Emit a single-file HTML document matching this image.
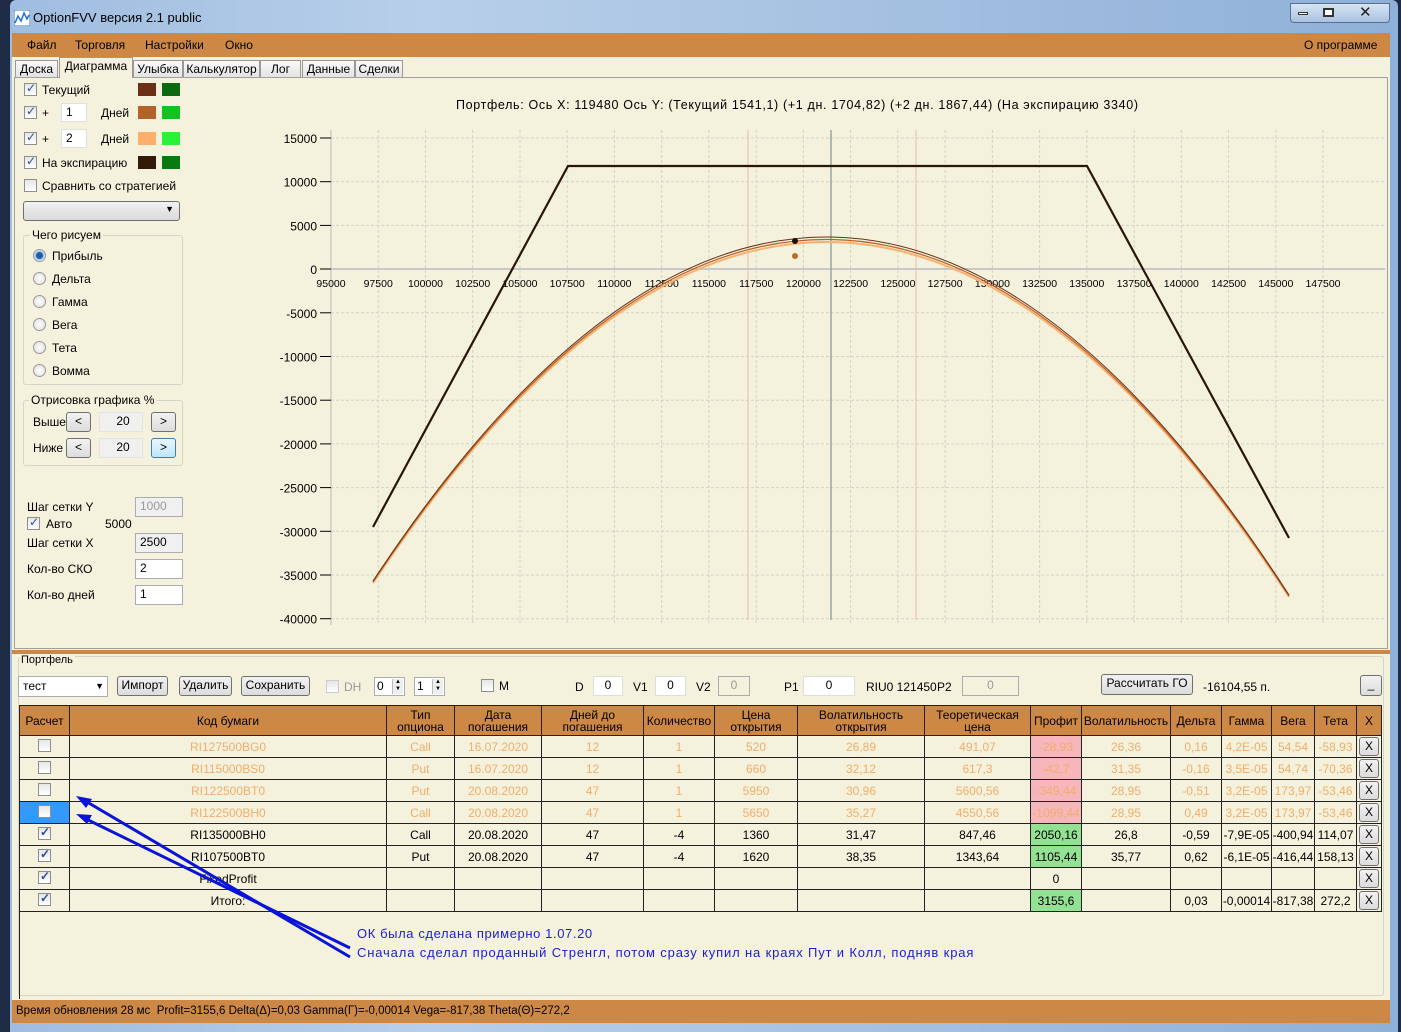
<!DOCTYPE html>
<html><head><meta charset="utf-8">
<style>
*{box-sizing:border-box;margin:0;padding:0}
body{width:1401px;height:1032px;position:relative;overflow:hidden;background:#1d2b45;font-family:"Liberation Sans","DejaVu Sans",sans-serif;font-size:12px;color:#000}
.a{position:absolute}
.n{font-family:"Liberation Sans Narrow","Liberation Sans",sans-serif}
.cb{position:absolute;width:13px;height:13px;border:1px solid #8e8f8f;background:linear-gradient(#e6e6e6,#fff)}
.cb.c::after{content:"✓";position:absolute;left:1px;top:-3px;font-size:12px;color:#2b4f9c;font-weight:bold}
.rb{position:absolute;width:13px;height:13px;border-radius:50%;border:1px solid #999;background:radial-gradient(#fff,#ddd)}
.rb.c{background:radial-gradient(#1b5fa8 0 3px,#9fc3e6 4px,#fff 6px)}
.in{position:absolute;background:#fff;border:1px solid #abadb3;padding-left:4px;line-height:17px}
.btn{position:absolute;border:1px solid #707070;border-radius:3px;background:linear-gradient(#f2f2f2,#dcdcdc);text-align:center;line-height:17px}
.sw{position:absolute;width:18px;height:13px}
.tab{position:absolute;top:60px;height:17px;border:1px solid #999;border-bottom:none;background:linear-gradient(#fafafa,#e3e3e3);text-align:center;line-height:16px}
table{border-collapse:collapse;table-layout:fixed}
td{border:1px solid #222;height:22px;text-align:center;font-family:"Liberation Sans Narrow","Liberation Sans",sans-serif;font-size:12px;white-space:nowrap;overflow:hidden}
th{border:1px solid #222;background:#cd8846;font-weight:normal;font-family:"Liberation Sans Narrow","Liberation Sans",sans-serif;font-size:12px;line-height:12px;height:30px}
tr.f td{color:#f2ad6a}
td.pk{background:#f6b6bb}
td.gr{background:#93e193}
.grp{position:absolute;border:1px solid #d5d5c8;border-radius:3px}
.gl{position:absolute;background:#f4f2dd;padding:0 2px}
.sp{position:absolute;right:1px;top:1px;width:11px;height:15px;border-left:1px solid #bbb;font-size:6px;line-height:7px;text-align:center;background:#eee}
</style></head><body>
<div class="a" style="left:10px;top:0;width:1388px;height:1032px;background:linear-gradient(90deg,#9fbde0,#b8cfe9 30%,#8fb0d8);border-radius:6px 6px 0 0"></div>
<div class="a" style="left:1290px;top:3px;width:100px;height:20px;border:1px solid #5a6f8f;border-radius:0 0 4px 4px;background:linear-gradient(#d6e4f3,#a9c2e0)"></div>
<div class="a" style="left:1298px;top:12px;width:10px;height:3px;background:#fff;border:1px solid #333"></div>
<div class="a" style="left:1323px;top:8px;width:11px;height:9px;border:2px solid #333;background:#fff"></div>
<div class="a" style="left:1359px;top:3px;font-size:15px;font-weight:bold;color:#222">✕</div>
<svg class="a" style="left:14px;top:10px" width="16" height="16"><rect width="16" height="16" fill="#fff" stroke="#3a6fc0"/><polyline points="1,13 4,6 7,11 10,3 13,9 15,5" fill="none" stroke="#1f6fd6" stroke-width="1.5"/></svg>
<div class="a" style="left:33px;top:10px;font-size:13px">OptionFVV версия 2.1 public</div>
<div class="a" style="left:12px;top:33px;width:1378px;height:990px;background:#f4f2dd"></div>
<div class="a" style="left:12px;top:33px;width:1378px;height:24px;background:#cd8846"></div>
<div class="a" style="top:38px;left:27px;font-size:12px">Файл</div>
<div class="a" style="top:38px;left:75px">Торговля</div>
<div class="a" style="top:38px;left:145px">Настройки</div>
<div class="a" style="top:38px;left:225px">Окно</div>
<div class="a" style="top:38px;left:1304px">О программе</div>
<div class="tab" style="left:15px;width:43px">Доска</div>
<div class="tab" style="left:59px;width:74px;top:57px;height:21px;background:#f4f2dd;z-index:2">Диаграмма</div>
<div class="tab" style="left:133px;width:50px">Улыбка</div>
<div class="tab" style="left:183px;width:77px">Калькулятор</div>
<div class="tab" style="left:260px;width:41px">Лог</div>
<div class="tab" style="left:302px;width:53px">Данные</div>
<div class="tab" style="left:355px;width:48px">Сделки</div>
<div class="a" style="left:14px;top:77px;width:1374px;height:572px;border:1px solid #a0a0a0"></div>
<div class="cb c" style="left:24px;top:83px"></div><div class="a" style="left:42px;top:83px">Текущий</div>
<div class="sw" style="left:138px;top:83px;background:#6b3015"></div><div class="sw" style="left:162px;top:83px;background:#0a6a10"></div>
<div class="cb c" style="left:24px;top:106px"></div><div class="a" style="left:42px;top:106px">+</div>
<div class="in" style="left:61px;top:103px;width:26px;height:19px;border-color:#e0e0e0">1</div><div class="a" style="left:101px;top:106px">Дней</div>
<div class="sw" style="left:138px;top:106px;background:#b4622c"></div><div class="sw" style="left:162px;top:106px;background:#12c21e"></div>
<div class="cb c" style="left:24px;top:132px"></div><div class="a" style="left:42px;top:132px">+</div>
<div class="in" style="left:61px;top:129px;width:26px;height:19px;border-color:#e0e0e0">2</div><div class="a" style="left:101px;top:132px">Дней</div>
<div class="sw" style="left:138px;top:132px;background:#fdb06c"></div><div class="sw" style="left:162px;top:132px;background:#2af23a"></div>
<div class="cb c" style="left:24px;top:156px"></div><div class="a" style="left:42px;top:156px">На экспирацию</div>
<div class="sw" style="left:138px;top:156px;background:#341a08"></div><div class="sw" style="left:162px;top:156px;background:#097a10"></div>
<div class="cb" style="left:24px;top:179px"></div><div class="a" style="left:42px;top:179px">Сравнить со стратегией</div>
<div class="a" style="left:23px;top:201px;width:157px;height:20px;border:1px solid #707070;border-radius:3px;background:linear-gradient(#f2f2f2,#dadada)"><span class="a" style="right:5px;top:2px;font-size:9px">▼</span></div>
<div class="grp" style="left:23px;top:235px;width:160px;height:150px"></div>
<div class="gl" style="left:30px;top:228px">Чего рисуем</div>
<div class="rb c" style="left:33px;top:249px"></div><div class="a" style="left:52px;top:249px">Прибыль</div>
<div class="rb" style="left:33px;top:272px"></div><div class="a" style="left:52px;top:272px">Дельта</div>
<div class="rb" style="left:33px;top:295px"></div><div class="a" style="left:52px;top:295px">Гамма</div>
<div class="rb" style="left:33px;top:318px"></div><div class="a" style="left:52px;top:318px">Вега</div>
<div class="rb" style="left:33px;top:341px"></div><div class="a" style="left:52px;top:341px">Тета</div>
<div class="rb" style="left:33px;top:364px"></div><div class="a" style="left:52px;top:364px">Вомма</div>
<div class="grp" style="left:23px;top:400px;width:160px;height:66px"></div>
<div class="gl" style="left:29px;top:393px">Отрисовка графика %</div>
<div class="a" style="left:33px;top:415px">Выше</div>
<div class="btn" style="left:66px;top:412px;width:25px;height:20px">&lt;</div>
<div class="in" style="left:99px;top:412px;width:44px;height:20px;background:#f0f0f0;border-color:#e4e4e4;text-align:center">20</div>
<div class="btn" style="left:151px;top:412px;width:25px;height:20px">&gt;</div>
<div class="a" style="left:33px;top:441px">Ниже</div>
<div class="btn" style="left:66px;top:438px;width:25px;height:20px">&lt;</div>
<div class="in" style="left:99px;top:438px;width:44px;height:20px;background:#f0f0f0;border-color:#e4e4e4;text-align:center">20</div>
<div class="btn" style="left:151px;top:438px;width:25px;height:20px;border-color:#3c7fb1;background:linear-gradient(#eaf6fd,#bee6fd)">&gt;</div>
<div class="a n" style="left:27px;top:500px">Шаг сетки Y</div>
<div class="in n" style="left:135px;top:497px;width:48px;height:20px;background:#f0f0f0;color:#999">1000</div>
<div class="cb c" style="left:27px;top:517px"></div><div class="a n" style="left:46px;top:517px">Авто</div><div class="a n" style="left:105px;top:517px">5000</div>
<div class="a n" style="left:27px;top:536px">Шаг сетки X</div>
<div class="in n" style="left:135px;top:533px;width:48px;height:20px;background:#f0f0f0">2500</div>
<div class="a n" style="left:27px;top:562px">Кол-во СКО</div>
<div class="in n" style="left:135px;top:559px;width:48px;height:20px">2</div>
<div class="a n" style="left:27px;top:588px">Кол-во дней</div>
<div class="in n" style="left:135px;top:585px;width:48px;height:20px">1</div>
<svg class="a" style="left:0;top:0" width="1401" height="660" font-family="Liberation Sans, sans-serif">
<g stroke="#d4d2c4" stroke-dasharray="3,2" stroke-width="1">
<line x1="331" y1="138" x2="1385" y2="138"/><line x1="331" y1="181.7" x2="1385" y2="181.7"/><line x1="331" y1="225.4" x2="1385" y2="225.4"/><line x1="331" y1="312.8" x2="1385" y2="312.8"/><line x1="331" y1="356.5" x2="1385" y2="356.5"/><line x1="331" y1="400.2" x2="1385" y2="400.2"/><line x1="331" y1="443.9" x2="1385" y2="443.9"/><line x1="331" y1="487.6" x2="1385" y2="487.6"/><line x1="331" y1="531.3" x2="1385" y2="531.3"/><line x1="331" y1="575" x2="1385" y2="575"/><line x1="331" y1="618.7" x2="1385" y2="618.7"/>
<line x1="378.2" y1="130" x2="378.2" y2="625"/><line x1="425.5" y1="130" x2="425.5" y2="625"/><line x1="472.7" y1="130" x2="472.7" y2="625"/><line x1="520" y1="130" x2="520" y2="625"/><line x1="567.2" y1="130" x2="567.2" y2="625"/><line x1="614.4" y1="130" x2="614.4" y2="625"/><line x1="661.7" y1="130" x2="661.7" y2="625"/><line x1="708.9" y1="130" x2="708.9" y2="625"/><line x1="756.2" y1="130" x2="756.2" y2="625"/><line x1="803.4" y1="130" x2="803.4" y2="625"/><line x1="850.6" y1="130" x2="850.6" y2="625"/><line x1="897.9" y1="130" x2="897.9" y2="625"/><line x1="945.1" y1="130" x2="945.1" y2="625"/><line x1="992.4" y1="130" x2="992.4" y2="625"/><line x1="1039.6" y1="130" x2="1039.6" y2="625"/><line x1="1086.8" y1="130" x2="1086.8" y2="625"/><line x1="1134.1" y1="130" x2="1134.1" y2="625"/><line x1="1181.3" y1="130" x2="1181.3" y2="625"/><line x1="1228.6" y1="130" x2="1228.6" y2="625"/><line x1="1275.8" y1="130" x2="1275.8" y2="625"/><line x1="1323" y1="130" x2="1323" y2="625"/>
</g>
<line x1="331" y1="269" x2="1385" y2="269" stroke="#c8c8c8" stroke-width="2"/>
<line x1="331" y1="130" x2="331" y2="625" stroke="#bbb"/>
<line x1="748" y1="130" x2="748" y2="620" stroke="#f2b8b0"/>
<line x1="916" y1="130" x2="916" y2="620" stroke="#f2b8b0"/>
<line x1="831" y1="130" x2="831" y2="620" stroke="#9aa89c" stroke-width="1.5"/>
<g stroke="#000"><line x1="320" y1="138" x2="331" y2="138"/><line x1="320" y1="181.7" x2="331" y2="181.7"/><line x1="320" y1="225.4" x2="331" y2="225.4"/><line x1="320" y1="269" x2="331" y2="269"/><line x1="320" y1="312.8" x2="331" y2="312.8"/><line x1="320" y1="356.5" x2="331" y2="356.5"/><line x1="320" y1="400.2" x2="331" y2="400.2"/><line x1="320" y1="443.9" x2="331" y2="443.9"/><line x1="320" y1="487.6" x2="331" y2="487.6"/><line x1="320" y1="531.3" x2="331" y2="531.3"/><line x1="320" y1="575" x2="331" y2="575"/><line x1="320" y1="618.7" x2="331" y2="618.7"/></g>
<g font-size="12" text-anchor="end"><text x="317" y="143">15000</text><text x="317" y="186.7">10000</text><text x="317" y="230.4">5000</text><text x="317" y="274">0</text><text x="317" y="317.8">-5000</text><text x="317" y="361.5">-10000</text><text x="317" y="405.2">-15000</text><text x="317" y="448.9">-20000</text><text x="317" y="492.6">-25000</text><text x="317" y="536.3">-30000</text><text x="317" y="580">-35000</text><text x="317" y="623.7">-40000</text></g>
<g font-size="10.5" text-anchor="middle"><text x="331" y="287">95000</text><text x="378.2" y="287">97500</text><text x="425.5" y="287">100000</text><text x="472.7" y="287">102500</text><text x="520" y="287">105000</text><text x="567.2" y="287">107500</text><text x="614.4" y="287">110000</text><text x="661.7" y="287">112500</text><text x="708.9" y="287">115000</text><text x="756.2" y="287">117500</text><text x="803.4" y="287">120000</text><text x="850.6" y="287">122500</text><text x="897.9" y="287">125000</text><text x="945.1" y="287">127500</text><text x="992.4" y="287">130000</text><text x="1039.6" y="287">132500</text><text x="1086.8" y="287">135000</text><text x="1134.1" y="287">137500</text><text x="1181.3" y="287">140000</text><text x="1228.6" y="287">142500</text><text x="1275.8" y="287">145000</text><text x="1323" y="287">147500</text></g>
<text x="456" y="109" font-size="12.5" textLength="682" lengthAdjust="spacing">Портфель: Ось X: 119480 Ось Y:  (Текущий 1541,1)  (+1 дн. 1704,82)  (+2 дн. 1867,44)  (На экспирацию 3340)</text>
<path d="M373,583 Q831,-106 1289,597" fill="none" stroke="#fdb06c" stroke-width="2"/>
<path d="M373,582 Q831,-110 1289,596" fill="none" stroke="#b4622c" stroke-width="1.2"/>
<path d="M373,581 Q831,-114 1289,595" fill="none" stroke="#6b3015" stroke-width="1"/>
<polyline points="373,527 568,166 1087,166 1289,538" fill="none" stroke="#2a1508" stroke-width="2.2"/>
<circle cx="795" cy="241" r="3" fill="#1e0e04"/><circle cx="795" cy="256" r="3" fill="#c06a2a"/>
</svg>
<div class="a" style="left:12px;top:650px;width:1378px;height:4px;background:#cd8846"></div>
<div class="a" style="left:18px;top:656px;width:1366px;height:340px;border:1px solid #d5d5c8;border-radius:3px"></div>
<div class="gl" style="left:19px;top:654px;font-size:11px">Портфель</div>
<div class="in n" style="left:18px;top:676px;width:90px;height:21px;line-height:19px">тест<span class="a" style="right:3px;top:0;font-size:9px">▼</span></div>
<div class="btn n" style="left:117px;top:676px;width:51px;height:20px">Импорт</div>
<div class="btn n" style="left:179px;top:676px;width:53px;height:20px">Удалить</div>
<div class="btn n" style="left:241px;top:676px;width:69px;height:20px">Сохранить</div>
<div class="cb" style="left:326px;top:680px;border-color:#ccc"></div><div class="a n" style="left:344px;top:680px;color:#999">DH</div>
<div class="in n" style="left:374px;top:677px;width:31px;height:19px;padding-left:2px">0<span class="sp">▲<br>▼</span></div>
<div class="in n" style="left:414px;top:677px;width:31px;height:19px;padding-left:2px">1<span class="sp">▲<br>▼</span></div>
<div class="cb" style="left:481px;top:679px"></div><div class="a n" style="left:499px;top:679px">M</div>
<div class="a n" style="left:575px;top:680px">D</div><div class="in n" style="left:593px;top:676px;width:30px;height:20px;text-align:center;padding:0;border-color:#ddd">0</div>
<div class="a n" style="left:633px;top:680px">V1</div><div class="in n" style="left:655px;top:676px;width:31px;height:20px;text-align:center;padding:0;border-color:#ddd">0</div>
<div class="a n" style="left:696px;top:680px">V2</div><div class="in n" style="left:718px;top:676px;width:32px;height:20px;text-align:center;padding:0;background:#f4f2dd;color:#999">0</div>
<div class="a n" style="left:784px;top:680px">P1</div><div class="in n" style="left:803px;top:676px;width:52px;height:20px;text-align:center;padding:0;border-color:#ddd">0</div>
<div class="a n" style="left:866px;top:680px">RIU0 121450</div><div class="a n" style="left:937px;top:680px">P2</div>
<div class="in n" style="left:962px;top:676px;width:57px;height:20px;text-align:center;padding:0;background:#f4f2dd;color:#999">0</div>
<div class="btn n" style="left:1101px;top:674px;width:92px;height:21px">Рассчитать ГО</div>
<div class="a n" style="left:1203px;top:680px">-16104,55 п.</div>
<div class="btn" style="left:1360px;top:675px;width:22px;height:21px">_</div>
<table class="a" style="left:19px;top:705px;width:1362px">
<colgroup><col style="width:50px"><col style="width:317px"><col style="width:68px"><col style="width:87px"><col style="width:102px"><col style="width:71px"><col style="width:83px"><col style="width:127px"><col style="width:106px"><col style="width:51px"><col style="width:89px"><col style="width:51px"><col style="width:50px"><col style="width:43px"><col style="width:42px"><col style="width:25px"></colgroup>
<tr><th>Расчет</th><th>Код бумаги</th><th>Тип<br>опциона</th><th>Дата<br>погашения</th><th>Дней до<br>погашения</th><th>Количество</th><th>Цена<br>открытия</th><th>Волатильность<br>открытия</th><th>Теоретическая<br>цена</th><th>Профит</th><th>Волатильность</th><th>Дельта</th><th>Гамма</th><th>Вега</th><th>Тета</th><th>X</th></tr>
<tr class="f"><td><span class="cb" style="position:relative;display:inline-block"></span></td><td>RI127500BG0</td><td>Call</td><td>16.07.2020</td><td>12</td><td>1</td><td>520</td><td>26,89</td><td>491,07</td><td class="pk">-28,93</td><td>26,36</td><td>0,16</td><td>4,2E-05</td><td>54,54</td><td>-58,93</td><td><span class="btn" style="position:relative;display:inline-block;width:20px;color:#000">X</span></td></tr>
<tr class="f"><td><span class="cb" style="position:relative;display:inline-block"></span></td><td>RI115000BS0</td><td>Put</td><td>16.07.2020</td><td>12</td><td>1</td><td>660</td><td>32,12</td><td>617,3</td><td class="pk">-42,7</td><td>31,35</td><td>-0,16</td><td>3,5E-05</td><td>54,74</td><td>-70,36</td><td><span class="btn" style="position:relative;display:inline-block;width:20px;color:#000">X</span></td></tr>
<tr class="f"><td><span class="cb" style="position:relative;display:inline-block"></span></td><td>RI122500BT0</td><td>Put</td><td>20.08.2020</td><td>47</td><td>1</td><td>5950</td><td>30,96</td><td>5600,56</td><td class="pk">-349,44</td><td>28,95</td><td>-0,51</td><td>3,2E-05</td><td>173,97</td><td>-53,46</td><td><span class="btn" style="position:relative;display:inline-block;width:20px;color:#000">X</span></td></tr>
<tr class="f"><td style="background:#3399ff"><span class="cb" style="position:relative;display:inline-block"></span></td><td>RI122500BH0</td><td>Call</td><td>20.08.2020</td><td>47</td><td>1</td><td>5650</td><td>35,27</td><td>4550,56</td><td class="pk">-1099,44</td><td>28,95</td><td>0,49</td><td>3,2E-05</td><td>173,97</td><td>-53,46</td><td><span class="btn" style="position:relative;display:inline-block;width:20px;color:#000">X</span></td></tr>
<tr><td><span class="cb c" style="position:relative;display:inline-block"></span></td><td>RI135000BH0</td><td>Call</td><td>20.08.2020</td><td>47</td><td>-4</td><td>1360</td><td>31,47</td><td>847,46</td><td class="gr">2050,16</td><td>26,8</td><td>-0,59</td><td>-7,9E-05</td><td>-400,94</td><td>114,07</td><td><span class="btn" style="position:relative;display:inline-block;width:20px">X</span></td></tr>
<tr><td><span class="cb c" style="position:relative;display:inline-block"></span></td><td>RI107500BT0</td><td>Put</td><td>20.08.2020</td><td>47</td><td>-4</td><td>1620</td><td>38,35</td><td>1343,64</td><td class="gr">1105,44</td><td>35,77</td><td>0,62</td><td>-6,1E-05</td><td>-416,44</td><td>158,13</td><td><span class="btn" style="position:relative;display:inline-block;width:20px">X</span></td></tr>
<tr><td><span class="cb c" style="position:relative;display:inline-block"></span></td><td>FixedProfit</td><td></td><td></td><td></td><td></td><td></td><td></td><td></td><td>0</td><td></td><td></td><td></td><td></td><td></td><td><span class="btn" style="position:relative;display:inline-block;width:20px">X</span></td></tr>
<tr><td><span class="cb c" style="position:relative;display:inline-block"></span></td><td>Итого:</td><td></td><td></td><td></td><td></td><td></td><td></td><td></td><td class="gr">3155,6</td><td></td><td>0,03</td><td>-0,00014</td><td>-817,38</td><td>272,2</td><td><span class="btn" style="position:relative;display:inline-block;width:20px">X</span></td></tr>
</table>
<div class="a" style="left:19px;top:911px;width:1px;height:88px;background:#222"></div>
<svg class="a" style="left:0;top:780px" width="400" height="190">
<line x1="350" y1="177" x2="82" y2="19" stroke="#0a14d8" stroke-width="3"/>
<line x1="350" y1="168" x2="82" y2="37" stroke="#0a14d8" stroke-width="3"/>
<polygon points="76,16 92,19 86,28" fill="#0a14d8"/>
<polygon points="76,34 92,35 87,44" fill="#0a14d8"/>
</svg>
<div class="a" style="left:357px;top:926px;color:#1c1cd6;font-size:13px;letter-spacing:0.6px">ОК была сделана примерно 1.07.20</div>
<div class="a" style="left:357px;top:945px;color:#1c1cd6;font-size:13px;letter-spacing:0.85px">Сначала сделал проданный Стренгл, потом сразу купил на краях Пут и Колл, подняв края</div>
<div class="a" style="left:12px;top:1000px;width:1378px;height:23px;background:#cd8846"></div>
<div class="a" style="left:16px;top:1005px;font-size:11.5px">Время обновления 28 мс&nbsp; Profit=3155,6 Delta(Δ)=0,03 Gamma(Γ)=-0,00014 Vega=-817,38 Theta(Θ)=272,2</div>
</body></html>
